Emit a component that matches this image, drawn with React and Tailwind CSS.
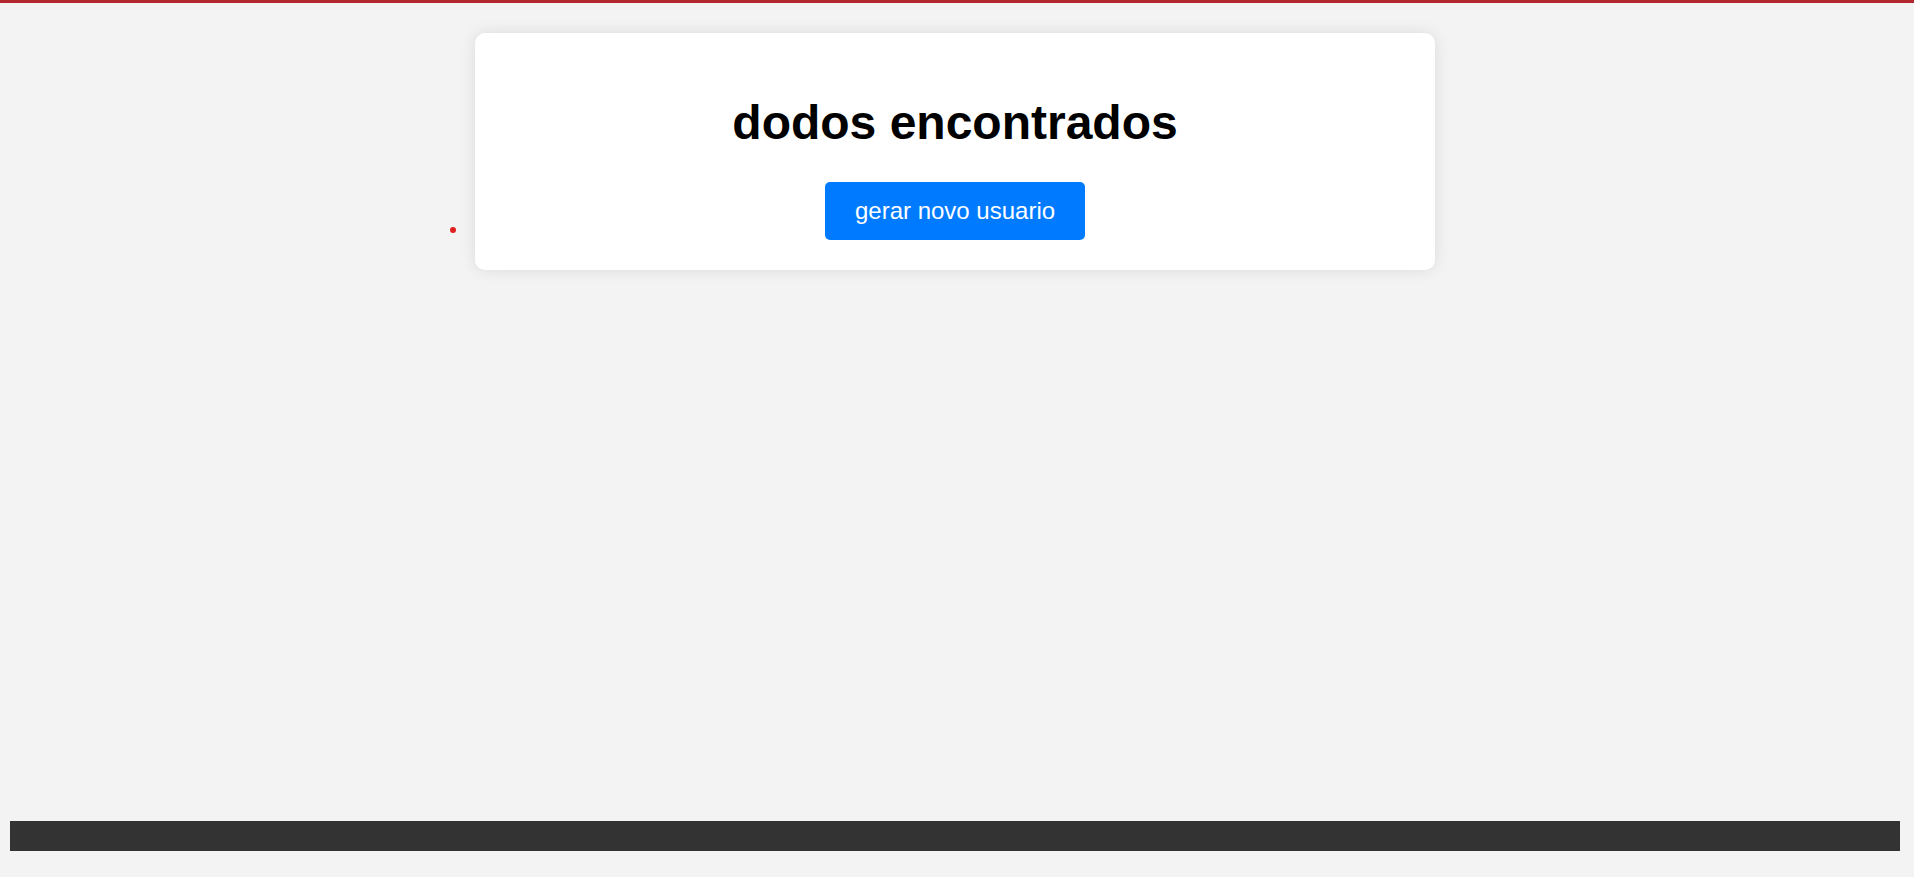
export default function App() {
  return (
    <div className="min-h-screen w-full bg-[#f3f3f3] border-t-[3px] border-[#b3262d] flex font-['Liberation_Sans',Arial,sans-serif]">
      <div className="w-[1910px] flex flex-col">
        <div className="relative mx-auto mt-[30px] w-[960px] bg-white rounded-[10px] shadow-[0_0_15px_rgba(0,0,0,0.1)] p-[30px] flex flex-col items-center">
          {/* stray list bullet left of the card */}
          <span className="absolute left-[-25px] top-[194px] w-[6px] h-[6px] rounded-full bg-[#e0201f]" />
          <h1 className="my-[32px] text-[48px] leading-[55px] font-bold text-black">dodos encontrados</h1>
          <button className="bg-[#007bff] text-white text-[24px] leading-[28px] px-[30px] py-[15px] rounded-[5px]">
            gerar novo usuario
          </button>
        </div>

        <footer className="mt-auto mb-[26px] mx-[10px] h-[30px] bg-[#333333]" />
      </div>
    </div>
  );
}
